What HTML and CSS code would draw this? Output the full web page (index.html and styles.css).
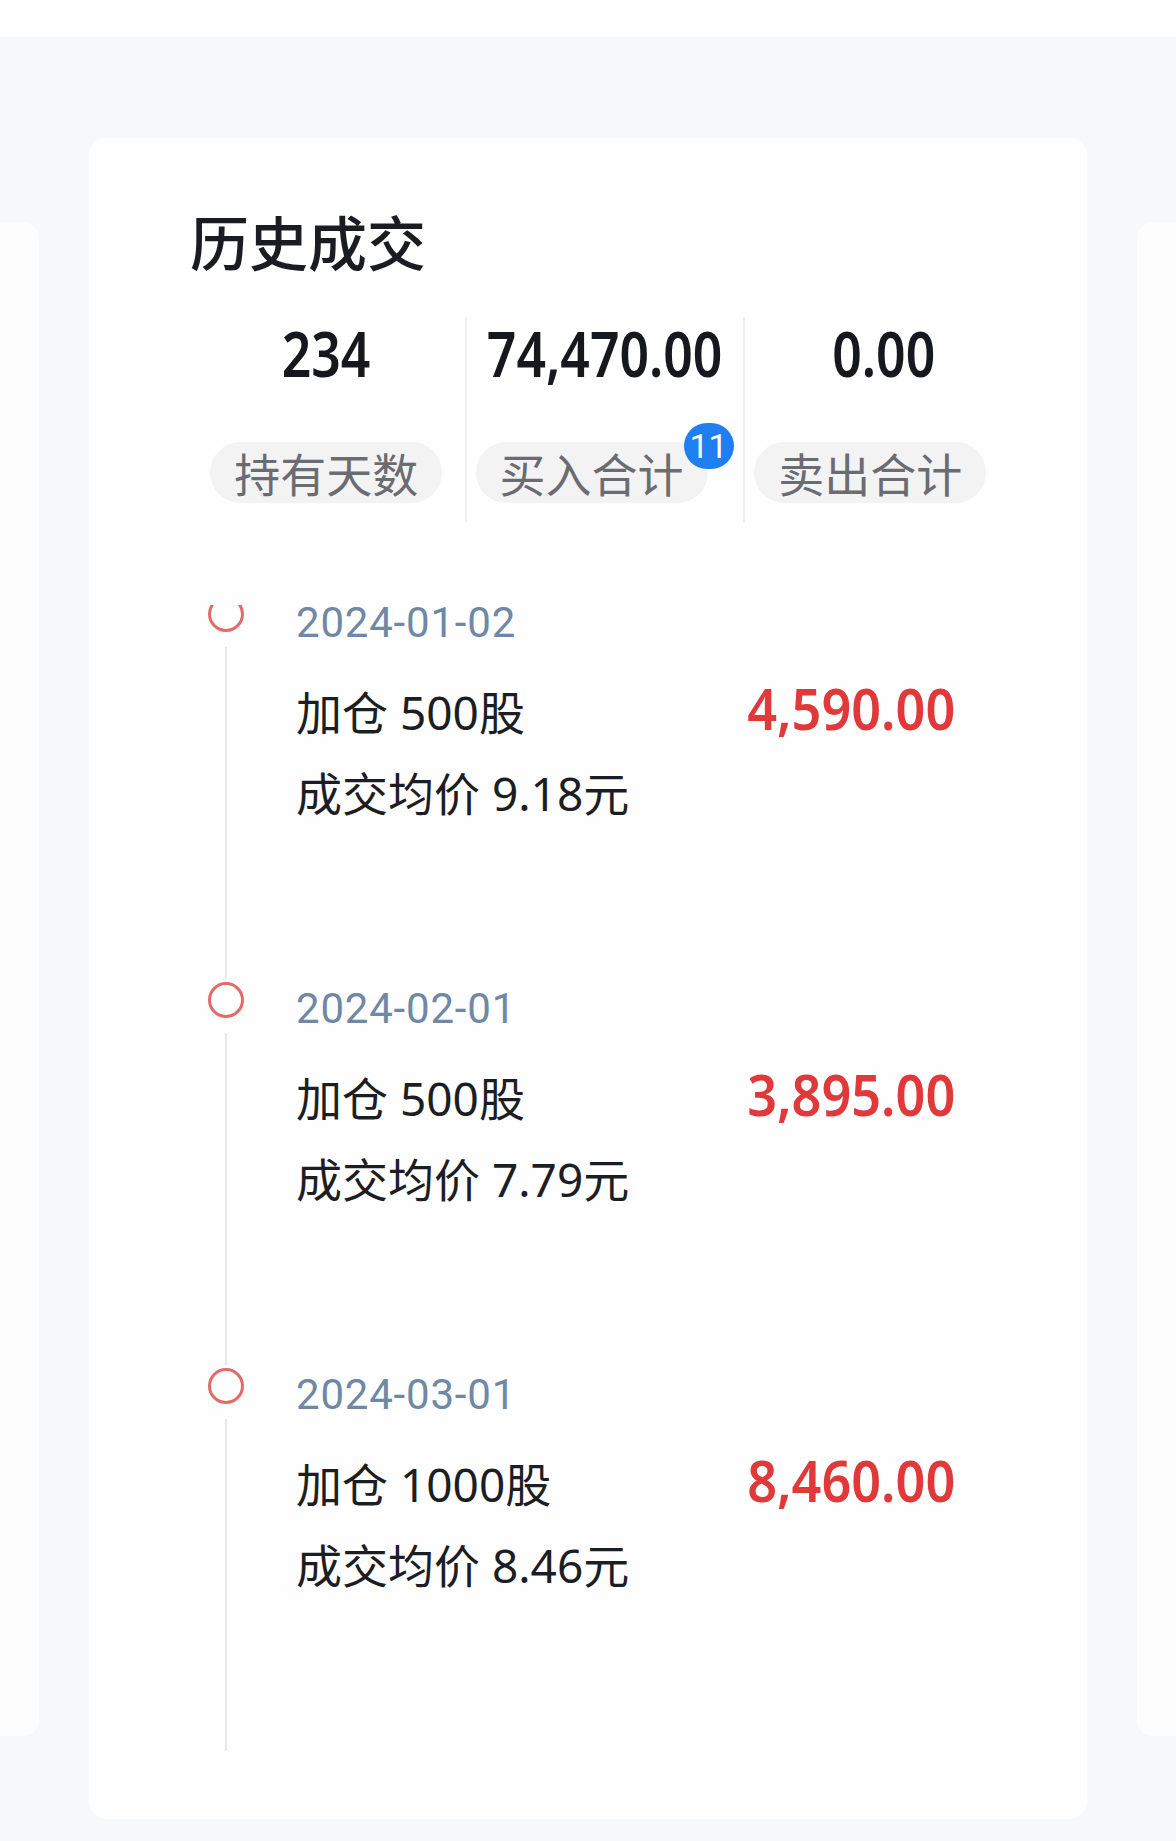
FILE: index.html
```html
<!DOCTYPE html>
<html lang="zh-CN">

<head>
    <meta charset="UTF-8">
    <meta name="viewport" content="width=device-width, initial-scale=1.0">
    <title>历史成交</title>
    <link rel="stylesheet" href="styles.css">
</head>

<body>
    <div class="topbar"></div>
    <div class="carousel">
        <div class="side-card"></div>
        <div class="card">
            <h2 class="card-title">历史成交</h2>
            <div class="stats">
                <div class="stat">
                    <span class="stat-value num">234</span>
                    <span class="stat-label"><span class="pill">持有天数</span></span>
                </div>
                <div class="stat">
                    <span class="stat-value num">74,470.00</span>
                    <span class="stat-label spaced"><span class="pill">买入合计</span><span class="badge">11</span></span>
                </div>
                <div class="stat">
                    <span class="stat-value num">0.00</span>
                    <span class="stat-label spaced"><span class="pill">卖出合计</span></span>
                </div>
            </div>
            <div class="timeline">
                <div class="tl-item">
                    <div class="tl-axis"><span class="tl-dot"></span><span class="tl-line"></span></div>
                    <div class="tl-body">
                        <div class="tl-date">2024-01-02</div>
                        <div class="tl-row">
                            <span>加仓 500股</span>
                            <span class="tl-amount num">4,590.00</span>
                        </div>
                        <div class="tl-row">成交均价 9.18元</div>
                    </div>
                </div>
                <div class="tl-item">
                    <div class="tl-axis"><span class="tl-dot"></span><span class="tl-line"></span></div>
                    <div class="tl-body">
                        <div class="tl-date">2024-02-01</div>
                        <div class="tl-row">
                            <span>加仓 500股</span>
                            <span class="tl-amount num">3,895.00</span>
                        </div>
                        <div class="tl-row">成交均价 7.79元</div>
                    </div>
                </div>
                <div class="tl-item">
                    <div class="tl-axis"><span class="tl-dot"></span><span class="tl-line"></span></div>
                    <div class="tl-body">
                        <div class="tl-date">2024-03-01</div>
                        <div class="tl-row">
                            <span>加仓 1000股</span>
                            <span class="tl-amount num">8,460.00</span>
                        </div>
                        <div class="tl-row">成交均价 8.46元</div>
                    </div>
                </div>
            </div>
        </div>
        <div class="side-card"></div>
    </div>
</body>

</html>
```

FILE: styles.css
```css
* {
    margin: 0;
    padding: 0;
    box-sizing: border-box;
}

body {
    background-color: #f7f8f9;
    font-family: "Noto Sans CJK SC", "Noto Sans", sans-serif;
    color: #1c1e24;
    height: 1841px;
    overflow: hidden;
}

.topbar {
    height: 37px;
    background-color: #fff;
}

/* 左右露出的卡片 */
.carousel {
    display: flex;
    justify-content: center;
    align-items: center;
    gap: 50px;
    padding-top: 101px;
    overflow: hidden;
}

.side-card {
    flex-shrink: 0;
    width: 898px;
    height: 1514px;
    border-radius: 16px;
    background-color: #fdfdfd;
}

.card {
    flex-shrink: 0;
    width: 998px;
    height: 1681px;
    padding-top: 62px;
    border-radius: 18px;
    background-color: #fefefe;
}

.card-title {
    margin-left: 101px;
    font-size: 59px;
    line-height: 81px;
    font-weight: 500;
    color: #1a1c22;
}

/* 数字：没有窄体字，横向压一下 */
.num {
    display: inline-block;
    font-family: "Noto Sans", Roboto, sans-serif;
    font-weight: 600;
    white-space: nowrap;
}

.stats {
    display: flex;
    width: 834px;
    margin: 36px 0 0 99px;
}

.stat {
    flex: 1 1 0;
    min-width: 0;
    height: 205px;
    padding-top: 4px;
    display: flex;
    flex-direction: column;
    align-items: center;
}

.stat + .stat {
    border-left: 2px solid #efefef;
}

.stat-value {
    font-size: 63px;
    line-height: 63px;
    color: #16181d;
    transform: scaleX(0.82);
}

.stat-label {
    position: relative;
    margin-top: 58px;
    display: flex;
    white-space: nowrap;
}

.stat-label.spaced {
    padding-right: 27px;
}

.pill {
    display: block;
    height: 61px;
    padding: 0 24px;
    border-radius: 31px;
    background-color: #f3f3f4;
    font-size: 46px;
    line-height: 61px;
    color: #6a6c72;
}

.badge {
    position: absolute;
    top: -19px;
    left: 208px;
    min-width: 50px;
    height: 46px;
    padding: 0 5px;
    border-radius: 23px;
    background-color: #1f7ef0;
    color: #fff;
    font-family: Roboto, sans-serif;
    font-size: 34px;
    line-height: 46px;
    text-align: center;
}

/* 成交记录时间轴 */
.timeline {
    margin-top: 74px;
    padding-left: 119px;
}

.tl-item {
    display: flex;
    height: 386px;
}

.tl-axis {
    width: 36px;
    display: flex;
    flex-direction: column;
    align-items: center;
}

.tl-dot {
    width: 36px;
    height: 36px;
    border: 3px solid #e46a6a;
    border-radius: 50%;
}

/* 列表滚动过一点，第一个圆圈上半截被遮住 */
.tl-item:first-child .tl-dot {
    clip-path: inset(9px 0 0 0);
}

.tl-line {
    flex: 1;
    width: 2px;
    margin: 15px 0 3px;
    background-color: #e8e8e8;
}

.tl-body {
    width: 659px;
    margin-left: 52px;
}

.tl-date {
    margin-top: 3px;
    font-family: Roboto, sans-serif;
    font-size: 42px;
    line-height: 48px;
    letter-spacing: 0.8px;
    color: #6f88a5;
}

.tl-date + .tl-row {
    margin-top: 20px;
}

.tl-row {
    display: flex;
    justify-content: space-between;
    align-items: baseline;
    font-family: "Noto Sans", "Noto Sans CJK SC", sans-serif;
    font-size: 46px;
    line-height: 81px;
}

.tl-amount {
    font-size: 58px;
    color: #e0393b;
    transform: scaleX(0.9);
    transform-origin: right center;
}
```
